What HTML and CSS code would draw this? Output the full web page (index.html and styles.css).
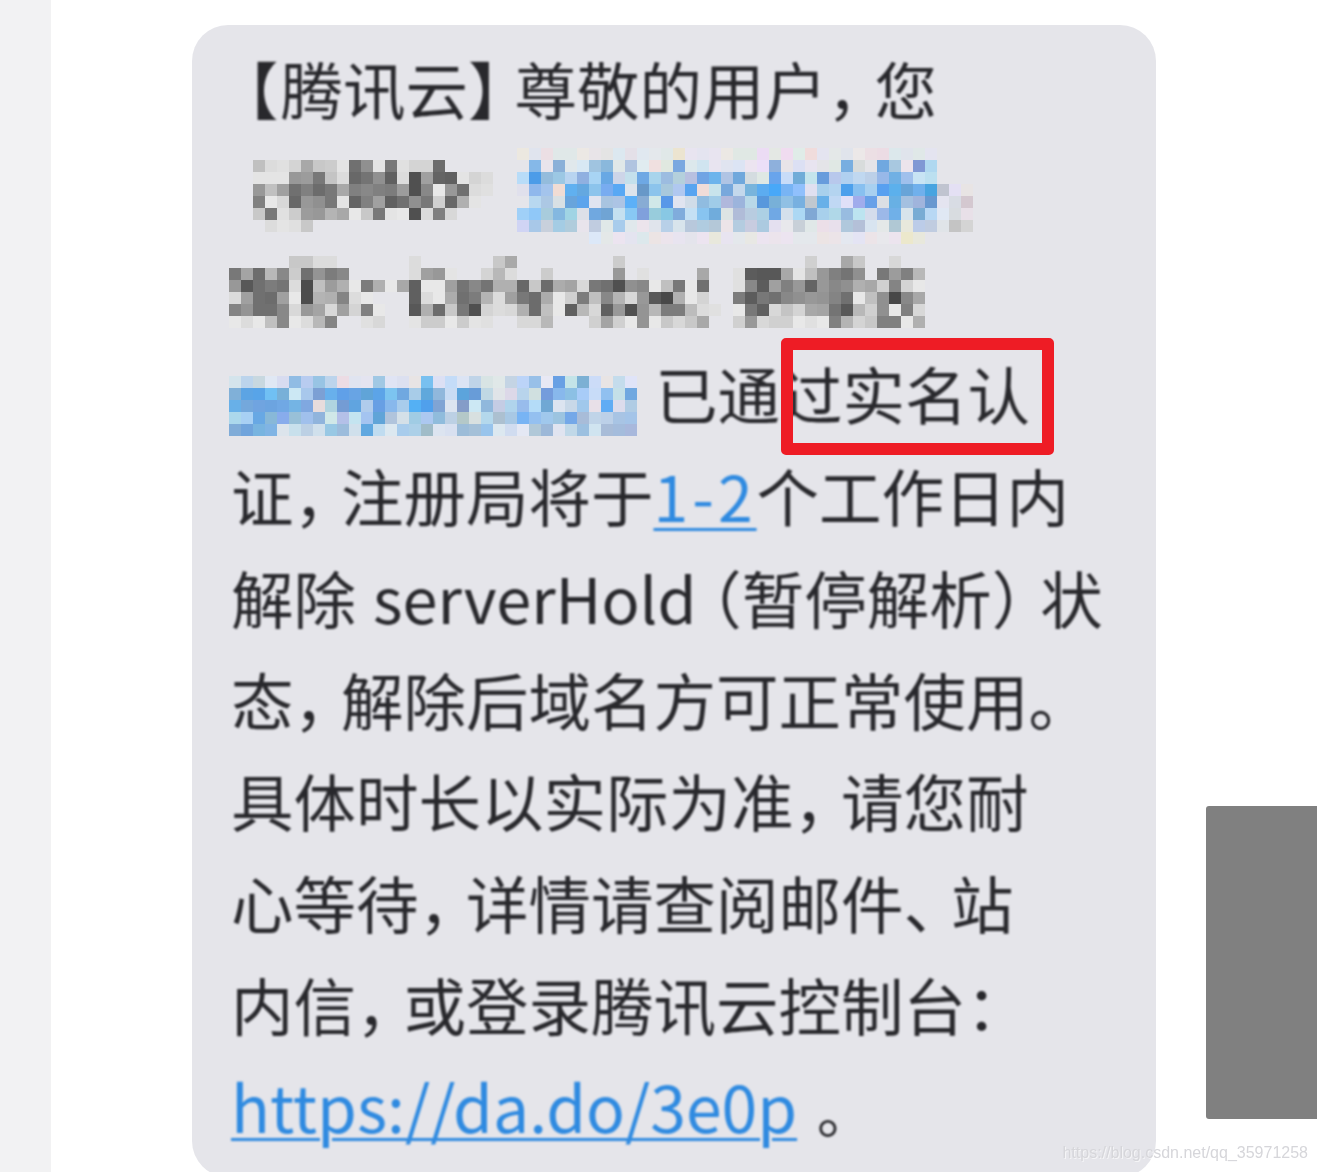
FILE: index.html
```html
<!DOCTYPE html>
<html lang="zh-CN">
<head>
<meta charset="utf-8">
<title>腾讯云短信</title>
<link rel="stylesheet" href="styles.css">
</head>
<body>
<div class="page">
  <aside class="rail"></aside>
  <main class="content">
    <article class="bubble">
      <p class="line"><span class="open-bracket">【</span>腾讯云<span class="close-bracket">】</span>尊敬的用户<span class="comma">，</span>您</p>
      <div class="line mosaic-line">
        <div class="mosaic mosaic-name" data-mosaic="name"></div>
        <div class="mosaic mosaic-domain" data-mosaic="domain"></div>
      </div>
      <div class="line mosaic-line">
        <div class="mosaic mosaic-order" data-mosaic="order"></div>
      </div>
      <div class="line mosaic-line">
        <div class="mosaic mosaic-link" data-mosaic="link"></div>
        <span class="after-mosaic">已通过实名认</span>
      </div>
      <p class="line">证<span class="comma">，</span>注册局将于<a class="link link-range" href="#">1-2</a>个工作日内</p>
      <p class="line">解除 <span class="latin">serverHold</span><span class="open-paren">（</span>暂停解析<span class="close-paren">）</span>状</p>
      <p class="line">态<span class="comma">，</span>解除后域名方可正常使用。</p>
      <p class="line">具体时长以实际为准<span class="comma">，</span>请您耐</p>
      <p class="line">心等待<span class="comma">，</span>详情请查阅邮件<span class="comma">、</span>站</p>
      <p class="line">内信<span class="comma">，</span>或登录腾讯云控制台：</p>
      <p class="line"><a class="link link-url" href="#">https://da.do/3e0p</a> <span class="full-stop">。</span></p>
    </article>
  </main>
  <div class="highlight"></div>
  <div class="side-block"></div>
  <div class="watermark">https://blog.csdn.net/qq_35971258</div>
</div>
<script src="mosaic.js"></script>
</body>
</html>
```

FILE: styles.css
```css
* { box-sizing: border-box; }

html, body {
  margin: 0;
  height: 100%;
  background: #ffffff;
}

.page {
  position: relative;
  display: flex;
  height: 1172px;
  overflow: hidden;
  font-family: "Noto Sans CJK SC", "Noto Sans", sans-serif;
}

.rail {
  flex: 0 0 51px;
  background: #f2f2f3;
}

.content {
  flex: 1;
  padding: 25px 0 0 141px;
}

.bubble {
  width: 964px;
  height: 1152px;
  padding: 12px 0 0 37px;
  background: #e5e5ea;
  border-radius: 36px;
  color: #28282c;
  font-size: 62.5px;
}

.line {
  display: block;
  margin: 0;
  height: 101.75px;
  line-height: 101.75px;
  white-space: nowrap;
  filter: blur(0.8px);
}

p.line {
  padding-left: 2px;
}

.mosaic-line {
  display: flex;
  align-items: flex-start;
  filter: none;
}

.mosaic svg {
  display: block;
  filter: blur(0.3px);
}

.mosaic-name { margin: 9.25px 0 0 24px; }
.mosaic-domain { margin: 9.25px 0 0 24px; }
.mosaic-order { margin-top: 15.5px; }
.mosaic-link { margin-top: 33.75px; }

.after-mosaic {
  margin-left: 18px;
  filter: blur(0.8px);
}

.open-bracket {
  margin-left: -15px;
  letter-spacing: 2px;
}

.close-bracket {
  letter-spacing: -16px;
}

.open-paren {
  margin-left: 14px;
  font-feature-settings: "halt";
}

.close-paren {
  letter-spacing: -14px;
}

.comma {
  letter-spacing: -15px;
}

.latin {
  margin-left: 3px;
  font-size: 63px;
}

.full-stop {
  font-size: 56px;
  margin-left: 6px;
}

.link {
  color: #2f8ae0;
  text-decoration: underline;
  text-decoration-thickness: 3px;
  text-underline-offset: 6px;
}

.link-range {
  letter-spacing: 4px;
}

.link-url {
  font-size: 64.3px;
  text-underline-offset: 5px;
}

.highlight {
  position: absolute;
  left: 781px;
  top: 338px;
  width: 273px;
  height: 117px;
  border: 12px solid #ee1c25;
  border-radius: 5px;
}

.side-block {
  position: absolute;
  left: 1206px;
  top: 806px;
  right: 0;
  height: 313px;
  background: #808080;
  border-radius: 3px 0 0 3px;
}

.watermark {
  position: absolute;
  right: 9px;
  top: 1143px;
  font-family: "Liberation Sans", Arial, sans-serif;
  font-size: 16px;
  line-height: 20px;
  color: #d6d6da;
  text-shadow: 1px 1px 0 rgba(255, 255, 255, 0.6);
  filter: blur(0.4px);
}
```

FILE: mosaic.js
```js
// Pixelated (redacted) regions of the message: 12px cells, one token per cell.
// "-" leaves the bubble showing, two hex digits are a grey, six are a colour.
var CELL = 12;

var MOSAICS = {
  name: [
    "-",
    "c0 dc e0 d4 a8 c8 cc e4 70 90 e4 78 e0 d4 d4 6c",
    "e4 e4 e4 98 9c 78 c4 dc 68 74 90 60 dc 50 a0 64 60 e4 d4 dc",
    "98 c0 a0 70 80 6c 78 a8 80 88 80 7c 9c 50 88 e8 98 70 dc e0",
    "80 e8 d8 68 98 90 78 e4 64 80 a0 60 70 90 78 d0 68 b0 e4",
    "c8 78 e0 cc 9c 98 b4 a8 e8 c8 78 e4 e8 50 dc 80 d8",
    "- dc e4 e0 c8"
  ],
  domain: [
    "ece8e0 e0e4ee ecdfe4 e0e8e8 e0e8e8 ece8e4 e8e4e8 e4e4e4 dce8f0 e4e0e8 e0e8f0 e4e8ec e0e8e8 ece4d0 e8e4f0 e4e4f0 e8e4f0 ece8e4 e0e8e4 e0e8e4 ecdcf4 e4e8e4 f0dcf0 e0ece8 f0dcdc e4e4f0 e4e8e8 e0e4ec ece8e8 ecdfe4 ecdce4 dce8ec e0e4ec e0e8e8 e4e4f0",
    "- 85b8e8 e8e4ec 8ab0d8 e0e8ec d8e8f4 a0c4e0 8ab8dc e0e8e8 b0c4e0 e0ecf0 f0e0e0 e0e8e0 7aa8e0 dce8ec d0e4f0 e8e4f0 e0e4f0 dce4f4 ece4f0 ecdff8 8eb0dc e8e4e8 dce0f4 e8e4f0 e4e4e8 e0e8e4 78aee0 d8dcdc e4e4e8 70a8e0 a8c8e0 ece4ec 8098d4 b0d8f0",
    "b8dcf8 4c9ce8 94bcdc 9cc8e4 b8d4f0 90b0e0 a8d4f4 68a8e4 cdd5e8 c4e0ec 6ea8e4 a8d4ec 9cbce0 b4d0dc b8c0e0 70a4e4 6cb4ec b0c4e4 70a8dc d4dce0 dfe8e4 68a4ec c8dcf8 70acd8 c4e4ec 689cdc b8c8ec b0d0f0 c0d8f0 bcd0e8 98b8e8 70b0e4 a0c0ec c8e4f4 bce0f0",
    "e0e0ec 90b8ec a4c4ec f0dcd4 60b0f0 64a8e0 8cc4ec 78acf0 58a8f4 dde4ec 6898c8 8cc4ec a8c8dc b0c8f0 58a4f0 f0dcd8 c8e4ec 78a8dc c4d8ec 78b4dc 5cacf0 48a8f8 78b4f4 90c0fc e0e0f0 a8d0ec b4d4f0 4ca0ec 88c0f0 a8d0f0 58a0f0 5cb0ec 68a4d8 70b0ec 48a4e0 c0c4d0 e4e0f4 e8e4e4",
    "- b8d8f0 acc8e4 d8e0e4 68a4dc 5ca4ec e0e4f0 a8c4e0 acc4e4 5cb0f8 88acd4 d0e8e8 5898e8 e0e4f0 d0dce8 90bce0 a0cce8 b0b8dc 9cb4dc b8d8e8 5898dc 78b0d8 90c0e4 78b0e0 c0c8d0 68b0e8 c0d8f4 e0e0f8 a0acec 68a0e8 dcdfe4 68b0e4 a4c0e0 a0b4dc 6898d0 e4e4f0 d8dce4 d4c8d0",
    "a0d0f8 90c8f8 a8ccdc 84b8e0 a0d4e4 dce0e8 70a8e0 70a4d4 c4e0f0 88c8f4 80a0dc 98ccdc 88c8e4 80acdc c4e0f4 88c4f0 70acdc dce4e4 b0bcd8 b8cce0 acd0e4 70a8e4 d4e0ec acd8f4 80a8d4 a8d0ec b0d8e8 98bce0 bce4f0 d4dcec 9cb8e8 70b0e8 d8e4ec 78acd4 b8d8f4 e0e8f4 d8dce0 e8e0e8",
    "d0d4f4 a8c8e8 c8d0dc a4cce4 b0ccdc e8e4ec c0cce0 e0e8e8 a8ccec e0e8ec ece4ec e0e4ec b8d0e8 d8e4ec b8c8dc b0cce0 b4c8d8 ece4e8 b4cce0 c8cce0 accae0 e4e0f0 e8e8ec c8d0d8 e0e8e8 ecdfe8 e8e0ec b0c8dc b4c0d8 d8e4f0 e4e8e8 b0c8d4 e8e8dc bccce8 c0cce0 e0e4e8 c4 d4",
    "- - - - - - dce8f8 e4e8e8 ece4f0 e4e4f0 dce8ec ece4e4 ece4ec e8e4f0 e4e4ec ece4f0 e8e8dc e8e4f0 e4e8ec e8e8e4 ece4f0 ece4ec ece4f0 e4e8ec e4e8ec ece4e4 ece4e8 e4e8f0 e4e4f4 ece4e8 e8e8ec ece4ee ece8cc e8e8dc"
  ],
  order: [
    "- - - - - c8 c8 dc dc - - - - - - dc - - - - - - c8 a9 - - - - - - - - cc - - - - - - - - - - - - - - - d0 - - a8 c8 - - d8",
    "78 a4 6c b8 88 cc 70 94 7c 88 - - - - - dc a0 98 e4 - - d4 b8 dc - - cc - - - - - 98 - e0 - - - - a8 - - e0 5c 58 58 a8 e4 c0 98 80 74 90 - 78 9c 80 b8",
    "98 58 70 7c 74 dc 4c c0 9c b0 e8 7c b0 e8 a8 60 e8 e8 a0 74 88 74 b0 b0 68 c8 6c ac a4 d8 78 70 50 90 88 e8 c0 78 e8 70 - - e0 88 5c a0 80 98 64 98 88 90 b0 a8 d0 84 d4 e8",
    "dc a0 70 6c a0 e8 4c b4 b0 84 dc e8 - - - 60 dc e8 ac 70 7c b4 dc a0 78 6c ac e8 d0 7c c0 88 b4 d8 98 58 48 b0 e8 d4 - - 7c 5c 78 70 88 90 98 94 84 70 e8 c0 90 48 88 a8",
    "84 94 70 70 88 d8 98 a4 d8 a0 d4 80 e8 - - 58 b0 6c c8 78 50 d4 dc d8 b0 6c c0 e8 60 b8 d8 60 98 50 94 b8 7c 7c bc dc e0 - e8 78 60 d8 c4 d4 a8 a4 74 58 b8 d0 90 e8 80 d8",
    "e8 dc e8 c0 88 e8 dc b8 84 - - e0 d8 - - e4 cc cc e8 cc e4 e0 - - d8 d8 b8 - - - d0 a4 d0 e8 94 e8 c8 d8 c8 a8 - - d0 98 d8 d0 d0 e8 e0 e8 80 b4 d4 c8 80 80 e8 b0"
  ],
  link: [
    "d4e4ec bcd4ec c8d8e0 e0e8f4 d8dcf0 90bce4 b8ccf0 98c4e4 bcd4ec ecdce4 e0e4f0 e4e4f0 a0c8e4 e0e4f4 dce0f0 e8e4e4 78c0f0 dce0f4 c4dcf8 dce4f4 c0d4e8 d8e4e4 e0e8e8 c4d4e4 bcd4f8 98c0e8 e8e8f4 68a0e4 c4e4e8 7cb0d4 ccdcf8 e8e4e4 c4dcec e0e4f8",
    "80b0d8 5ca4e4 58a4e8 70c0f4 78b0d8 cce8f4 a8c8ec 7ca0d4 68b0ec 60a0e8 68a4e4 60a4d8 5ca4e8 7cc4f0 70a8e0 a8cce8 60a8dc 90b8dc c8dcf4 5ca4dc 689cd8 c0d8e4 e0e4e8 dcd8e8 b8d4ec d0e0e0 749cdc 88b8ec 8cc0e4 a8ccf8 c8dcf8 90c0f0 c4e0e8 70a8e0",
    "68b0e8 74a8dc 70a4e0 6ca4e0 70a8e4 74b4e4 80a8e0 e8dcdc b0d4e0 749cd4 60a4e0 b0ccec 689fe4 88b8ec a8ccec 54b0f4 50a0ec 80a4d4 dce4f0 849cc8 cce8f4 90b8dc c4cce4 b0d4ec 98bcec b4dcf8 70a8d4 dce4f0 c8d8e8 a0c8ec e8e0e8 60acf4 dcdcec b0cce4",
    "acd8ec a8d0f4 68a8e4 88b8d8 88acec 98c0d8 a0c0ec 90b4dc d0e8e8 b4c0e8 c4e4f0 a4c4f0 60a4d8 b0c4dc d4e0e8 a0cce4 acc8f0 90bcdc bcd0e4 b4c8c8 d8e0e0 b4d8ec acc0d0 a8c8e4 78b4f4 94c0f0 a0c8ec 9cc4e0 74a8e8 a8bcd8 c0d4e8 bcd0e8 a8c4e4 a4c4e8",
    "80acd8 70a4dc 78b4e0 80b4e4 dce4ec c8e0ec bcd0e4 d0e0ec 98c8e4 9cbcdc d0e0ec 60a8e0 c0dcf0 dce8f0 a8ccec acd0e8 a0bcc8 dce4f0 d8e0f0 9cbcd8 a4c0d8 98c4ec dce8f0 d0dcf0 e4e8f4 b0c8d8 9cb8d8 e0e4f0 c0d8e8 9cc0e0 d0e4f0 a8bcd8 a4bcdc a8b8dc"
  ]
};

function tokenColor(token) {
  if (token.length === 6) return "#" + token;
  return "#" + token + token + token;
}

function drawMosaic(host) {
  var rows = MOSAICS[host.getAttribute("data-mosaic")];
  var ns = "http://www.w3.org/2000/svg";
  var svg = document.createElementNS(ns, "svg");
  var cols = 0;
  rows.forEach(function (row, y) {
    var tokens = row.split(" ");
    cols = Math.max(cols, tokens.length);
    tokens.forEach(function (token, x) {
      if (token === "-") return;
      var rect = document.createElementNS(ns, "rect");
      rect.setAttribute("x", x * CELL);
      rect.setAttribute("y", y * CELL);
      rect.setAttribute("width", CELL);
      rect.setAttribute("height", CELL);
      rect.setAttribute("fill", tokenColor(token));
      svg.appendChild(rect);
    });
  });
  svg.setAttribute("width", cols * CELL);
  svg.setAttribute("height", rows.length * CELL);
  svg.setAttribute("shape-rendering", "crispEdges");
  host.appendChild(svg);
}

Array.prototype.forEach.call(document.querySelectorAll("[data-mosaic]"), drawMosaic);
```
